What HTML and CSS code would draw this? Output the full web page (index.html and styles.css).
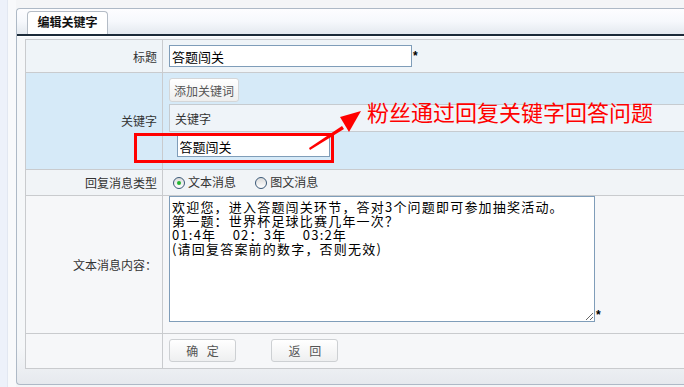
FILE: index.html
```html
<!DOCTYPE html>
<html lang="zh-CN">
<head>
    <meta charset="UTF-8">
    <title>编辑关键字</title>
    <link rel="stylesheet" href="styles.css">
</head>
<body>
    <div class="page">
        <div class="side"></div>
        <div class="gap"></div>
        <div class="panel">
            <div class="panel-head">
                <div class="tab">编辑关键字</div>
            </div>
            <div class="panel-body">
                <table class="form-table">
                    <tr class="row-title">
                        <th>标题</th>
                        <td><input class="text-input" type="text" value="答题闯关"><span class="req">*</span></td>
                    </tr>
                    <tr class="row-keyword">
                        <th>关键字</th>
                        <td class="keyword-cell">
                            <button class="small-btn" type="button">添加关键词</button>
                            <table class="kw-table">
                                <tr><th>关键字</th></tr>
                                <tr><td><input class="kw-input" type="text" value="答题闯关"></td></tr>
                            </table>
                        </td>
                    </tr>
                    <tr class="row-type">
                        <th>回复消息类型</th>
                        <td>
                            <label class="radio-item"><span class="radio on"></span>文本消息</label>
                            <label class="radio-item"><span class="radio"></span>图文消息</label>
                        </td>
                    </tr>
                    <tr class="row-content">
                        <th>文本消息内容：</th>
                        <td><textarea class="content-input">欢迎您，进入答题闯关环节，答对3个问题即可参加抽奖活动。
第一题：世界杯足球比赛几年一次？
01:4年    02：3年    03:2年
(请回复答案前的数字，否则无效)</textarea><span class="req req-area">*</span></td>
                    </tr>
                    <tr class="row-actions">
                        <th></th>
                        <td>
                            <button class="btn" type="button">确&nbsp;定</button>
                            <button class="btn" type="button">返&nbsp;回</button>
                        </td>
                    </tr>
                </table>
            </div>
        </div>

        <!-- annotation drawn over the screenshot -->
        <div class="note-box"></div>
        <svg class="note-arrow" width="60" height="50" viewBox="0 0 60 50">
            <polygon points="0,39 33,17 35,20 1,41" fill="#f00"/>
            <polygon points="52,2 31,8 40,23" fill="#f00"/>
        </svg>
        <div class="note-text">粉丝通过回复关键字回答问题</div>
    </div>
</body>
</html>
```

FILE: styles.css
```css
* {
    box-sizing: border-box;
}

body {
    margin: 0;
    background-color: #f4f5f7;
    overflow: hidden;
    font-family: "Liberation Sans", "Noto Sans CJK SC", sans-serif;
    font-size: 12px;
    color: #333;
}

.page {
    position: relative;
    display: flex;
    height: 387px;
    padding-top: 8px;
}

.side {
    flex-shrink: 0;
    width: 8px;
    margin-top: -8px;
    background-color: #edf1fa;
    border-right: 1px solid #e2e7f1;
}

.gap {
    flex-shrink: 0;
    width: 8px;
    margin-top: -8px;
    background-color: #f8f9fb;
}

.panel {
    width: 700px;
    flex-shrink: 0;
    height: 377px;
    border: 1px solid #aeb9c6;
    border-right: none;
    border-radius: 4px 0 0 4px;
    background: linear-gradient(#f5f7f9 90%, #e6e9ee);
}

.panel-head {
    display: flex;
    align-items: flex-end;
    height: 27px;
    padding-left: 10px;
    background: linear-gradient(#fdfdff, #f6f8fc 50%, #e4e9ef);
    border-top-left-radius: 4px;
    border-bottom: 2px solid #1c2b39;
}

.tab {
    width: 81px;
    height: 23px;
    border: 1px solid #b4bcc6;
    border-bottom: none;
    border-radius: 4px 4px 0 0;
    background-color: #fff;
    text-align: center;
    line-height: 23px;
    font-weight: bold;
    color: #111;
}

.panel-body {
    padding: 2px 0 0 8px;
    border-top: 1px solid #fff;
}

.form-table {
    width: 100%;
    border-collapse: collapse;
}

.form-table > tbody > tr > th,
.form-table > tbody > tr > td {
    border: 1px solid #c9cbce;
    padding: 0;
}

.form-table > tbody > tr > th {
    width: 137px;
    padding-right: 5px;
    text-align: right;
    font-weight: normal;
    color: #333;
}

.form-table > tbody > tr > td {
    padding-left: 6px;
}

.row-title > th,
.row-title > td {
    height: 33px;
    background-color: #eff4f8;
}

.row-keyword > th,
.row-keyword > td {
    height: 96px;
    background-color: #d6eaf8;
}

.row-type > th,
.row-type > td {
    height: 26px;
    background-color: #f1f4f7;
}

.row-content > th,
.row-content > td {
    height: 138px;
    background-color: #f6f7f9;
}

.row-content > td {
    vertical-align: top;
    padding-top: 3px;
}

.row-actions > th,
.row-actions > td {
    height: 35px;
    background-color: #f6f7f9;
}

.row-actions > th {
    border-right: none;
}

.row-actions > td {
    border-left: none;
    padding-left: 9px;
}

.text-input {
    width: 243px;
    height: 22px;
    margin: 0;
    padding: 0 2px;
    border: 1px solid #7f9db9;
    font-family: "Noto Sans CJK SC", sans-serif;
    font-size: 13px;
    color: #000;
    vertical-align: middle;
}

.req {
    margin-left: 1px;
    color: #000;
    font-weight: bold;
    vertical-align: middle;
}

.form-table > tbody > tr > td.keyword-cell {
    vertical-align: top;
    padding: 5px 0 0 6px;
}

.small-btn {
    display: block;
    height: 24px;
    margin: 0 0 2px 0;
    padding: 0 4px;
    border: 1px solid #d4d6d8;
    border-radius: 3px;
    background: linear-gradient(#ffffff, #eeeeee);
    font-family: "Noto Sans CJK SC", sans-serif;
    font-size: 12px;
    color: #555;
}

.kw-table {
    width: 100%;
    border-collapse: collapse;
}

.kw-table th {
    height: 27px;
    padding-left: 5px;
    border: 1px solid #c6cbd0;
    border-right: none;
    background-color: #eff4f9;
    text-align: left;
    font-weight: normal;
    color: #333;
}

.kw-table td {
    height: 37px;
    padding: 3px 0 0 7px;
    vertical-align: top;
}

.kw-input {
    width: 153px;
    height: 22px;
    margin: 0;
    padding: 0 2px;
    border: 1px solid #7f9db9;
    font-family: "Noto Sans CJK SC", sans-serif;
    font-size: 13px;
    color: #000;
}

.radio-item {
    display: inline-flex;
    align-items: center;
    margin-right: 12px;
    color: #333;
}

.radio {
    width: 12px;
    height: 12px;
    margin: 3px 3px 0 4px;
    border: 1px solid #3a5877;
    border-radius: 50%;
    background: linear-gradient(#dcdcdc, #ffffff);
    position: relative;
}

.radio.on::after {
    content: "";
    position: absolute;
    left: 3px;
    top: 3px;
    width: 4px;
    height: 4px;
    border-radius: 50%;
    background-color: #22b531;
}

.content-input {
    width: 426px;
    height: 126px;
    margin: 0;
    padding: 3px 2px;
    border: 1px solid #7f9db9;
    font-family: "Noto Sans CJK SC", sans-serif;
    font-size: 13px;
    line-height: 14px;
    letter-spacing: 1.2px;
    color: #000;
    vertical-align: bottom;
}

.req-area {
    vertical-align: bottom;
    margin-left: 1px;
}

.btn {
    width: 67px;
    height: 23px;
    margin: 0 32px 0 0;
    padding: 0 0 0 3px;
    border: 1px solid #cdd0d3;
    border-radius: 3px;
    background: linear-gradient(#ffffff, #eeeff0);
    font-family: "Noto Sans CJK SC", sans-serif;
    font-size: 12px;
    letter-spacing: 3px;
    color: #555;
}

/* red annotation on top of the form */
.note-box {
    position: absolute;
    left: 134px;
    top: 133px;
    width: 200px;
    height: 30px;
    border: 3px solid #f00;
}

.note-arrow {
    position: absolute;
    left: 309px;
    top: 109px;
}

.note-text {
    position: absolute;
    left: 367px;
    top: 98px;
    font-family: "Noto Sans CJK SC", sans-serif;
    font-size: 22px;
    line-height: 26px;
    color: #f00;
}
```
